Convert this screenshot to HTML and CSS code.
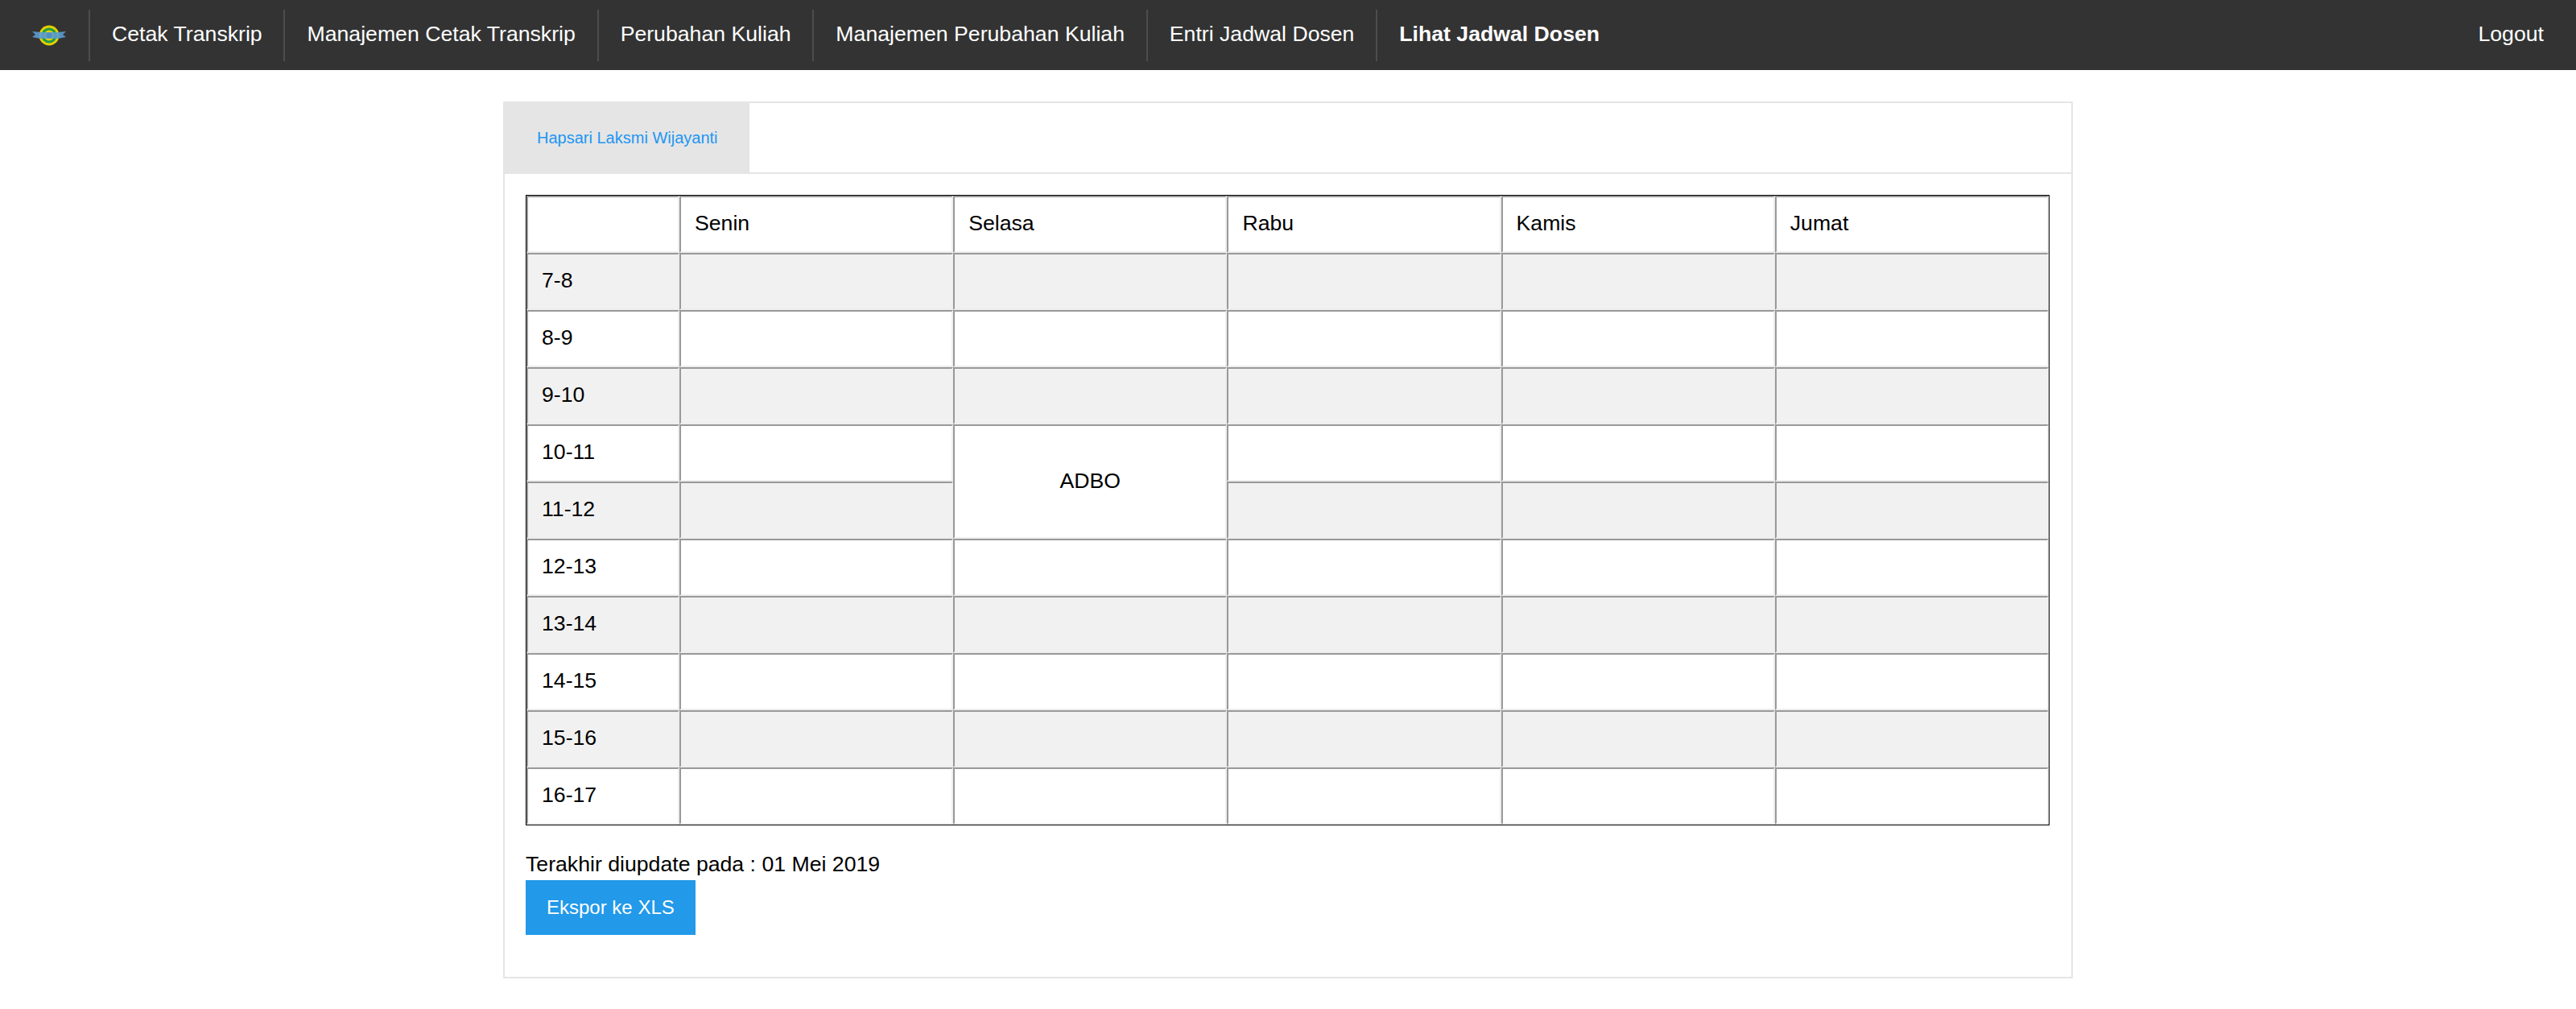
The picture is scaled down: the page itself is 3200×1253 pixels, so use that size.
FILE: index.html
```html
<!DOCTYPE html>
<html>
<head>
    <title>Lihat Jadwal Dosen</title>
    <link rel="stylesheet" href="styles.css">
</head>

<body>
    <nav class="navbar">
        <a class="nav-logo" href="#">
            <svg width="42" height="26" viewBox="0 0 42 26">
                <circle cx="21" cy="13" r="12.5" fill="#e2d000"/>
                <circle cx="21" cy="13" r="9.5" fill="#1f9a4a"/>
                <circle cx="21" cy="13" r="6.5" fill="#e2d000"/>
                <path d="M0 8 L10 9 H32 L42 8 L38 12 L42 15 L32 17 H10 L0 15 L4 12 Z" fill="#5b9bd0" opacity="0.9"/>
                <circle cx="21" cy="13" r="3.5" fill="#4f8fc4"/>
            </svg>
        </a>
        <a class="nav-item" href="#">Cetak Transkrip</a>
        <a class="nav-item" href="#">Manajemen Cetak Transkrip</a>
        <a class="nav-item" href="#">Perubahan Kuliah</a>
        <a class="nav-item" href="#">Manajemen Perubahan Kuliah</a>
        <a class="nav-item" href="#">Entri Jadwal Dosen</a>
        <a class="nav-item active" href="#">Lihat Jadwal Dosen</a>
        <a class="nav-logout" href="#">Logout</a>
    </nav>

    <div class="card">
        <div class="tabs">
            <a class="tab" href="#">Hapsari Laksmi Wijayanti</a>
        </div>
        <div class="card-body">
            <table class="jadwal">
                <tr>
                    <td class="jam"></td><td>Senin</td><td>Selasa</td><td>Rabu</td><td>Kamis</td><td>Jumat</td>
                </tr>
                <tr class="odd"><td>7-8</td><td></td><td></td><td></td><td></td><td></td></tr>
                <tr><td>8-9</td><td></td><td></td><td></td><td></td><td></td></tr>
                <tr class="odd"><td>9-10</td><td></td><td></td><td></td><td></td><td></td></tr>
                <tr><td>10-11</td><td></td><td class="matkul" rowspan="2">ADBO</td><td></td><td></td><td></td></tr>
                <tr class="odd"><td>11-12</td><td></td><td></td><td></td><td></td></tr>
                <tr><td>12-13</td><td></td><td></td><td></td><td></td><td></td></tr>
                <tr class="odd"><td>13-14</td><td></td><td></td><td></td><td></td><td></td></tr>
                <tr><td>14-15</td><td></td><td></td><td></td><td></td><td></td></tr>
                <tr class="odd"><td>15-16</td><td></td><td></td><td></td><td></td><td></td></tr>
                <tr><td>16-17</td><td></td><td></td><td></td><td></td><td></td></tr>
            </table>
            <p class="update">Terakhir diupdate pada : 01 Mei 2019</p>
            <a class="btn" href="#">Ekspor ke XLS</a>
        </div>
    </div>
</body>
</html>
```

FILE: styles.css
```css
body {
    margin: 0;
    font-family: 'Liberation Sans', Arial, sans-serif;
    background-color: #fff;
    color: #000;
}

a {
    text-decoration: none;
}

.navbar {
    display: flex;
    align-items: center;
    height: 87px;
    background-color: #333;
}

.nav-logo {
    display: flex;
    align-items: center;
    justify-content: center;
    box-sizing: border-box;
    width: 110px;
    height: 64px;
    padding-left: 12px;
}

.nav-item {
    display: flex;
    align-items: center;
    box-sizing: border-box;
    height: 64px;
    padding: 0 26.8px 3px 27px;
    border-left: 2px solid #4d4d4d;
    color: #fff;
    font-size: 26.67px;
}

.nav-item.active {
    font-weight: bold;
}

.nav-logout {
    margin-left: auto;
    padding: 0 40px 3px 0;
    color: #fff;
    font-size: 26.67px;
}

.card {
    box-sizing: border-box;
    width: 1950px;
    height: 1089px;
    margin: 39px auto 0;
    border: 2px solid #e5e5e5;
}

.tabs {
    display: flex;
    height: 86px;
    border-bottom: 2px solid #e5e5e5;
}

.tab {
    display: flex;
    align-items: center;
    padding: 0 39px 0 40px;
    background-color: #e5e5e5;
    color: #2196f3;
    font-size: 20px;
}

.card-body {
    padding: 26px 26px 0;
}

.jadwal {
    width: 1893px;
    table-layout: fixed;
    border-collapse: separate;
    border-spacing: 0;
    border: 1px solid #000;
    font-size: 26.67px;
}

.jadwal td {
    box-sizing: border-box;
    height: 71px;
    padding: 0 17px 2px;
    border-top: 2px solid #999;
    border-left: 2px solid #999;
    border-right: 2px solid #eee;
    border-bottom: 2px solid #eee;
}

.jadwal td:first-child {
    width: 190px;
}

.jadwal .odd td {
    background-color: #f1f1f1;
}

.jadwal td.matkul {
    background-color: #fff;
    text-align: center;
}

.update {
    margin: 28px 0 0;
    font-size: 26.67px;
    line-height: 40px;
}

.btn {
    display: inline-block;
    padding: 0 26px;
    background-color: #2299e9;
    color: #fff;
    font-size: 24px;
    line-height: 68px;
}
```
